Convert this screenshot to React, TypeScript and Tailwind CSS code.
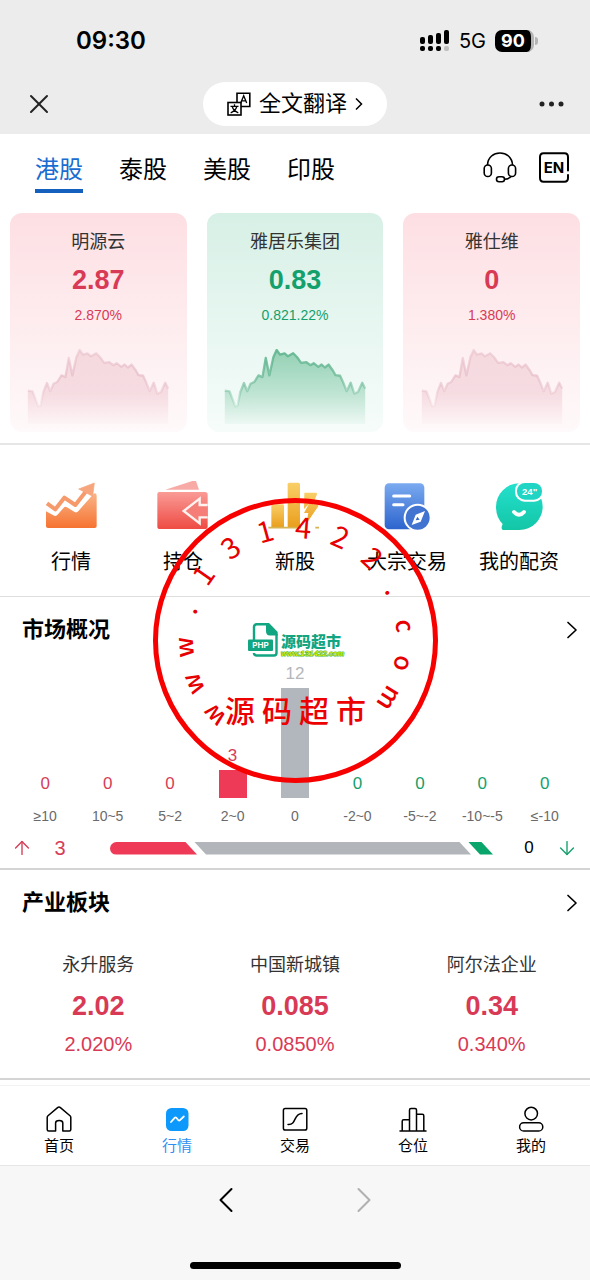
import React from "react";
import { ArrowDown, ArrowUp, ChevronLeft, ChevronRight, X } from "lucide-react";

const cards = [
  { name: "明源云", price: "2.87", change: "2.870%", up: true },
  { name: "雅居乐集团", price: "0.83", change: "0.821.22%", up: false },
  { name: "雅仕维", price: "0", change: "1.380%", up: true },
];

const industries = [
  { name: "永升服务", price: "2.02", change: "2.020%" },
  { name: "中国新城镇", price: "0.085", change: "0.0850%" },
  { name: "阿尔法企业", price: "0.34", change: "0.340%" },
];

const distribution = [
  { label: "≥10", value: 0, color: "text-[#d63d57]" },
  { label: "10~5", value: 0, color: "text-[#d63d57]" },
  { label: "5~2", value: 0, color: "text-[#d63d57]" },
  { label: "2~0", value: 3, color: "text-[#d63d57]", bar: "bg-[#ee3a56]" },
  { label: "0", value: 12, color: "text-[#b4b7bc]", bar: "bg-[#b2b6bd]" },
  { label: "-2~0", value: 0, color: "text-[#14a06c]" },
  { label: "-5~-2", value: 0, color: "text-[#14a06c]" },
  { label: "-10~-5", value: 0, color: "text-[#14a06c]" },
  { label: "≤-10", value: 0, color: "text-[#14a06c]" },
];

const TREND =
  "M0 126 L14 128 L22 148 L32 174 L39 170 L47 130 L58 103 L68 128 L78 105 L89 100 L102 80 L114 85 L124 27 L135 80 L147 25 L157 3 L167 17 L181 13 L191 22 L207 13 L219 25 L231 42 L247 40 L259 49 L269 43 L283 54 L293 47 L303 56 L314 47 L327 65 L335 79 L349 81 L359 103 L369 128 L381 102 L392 135 L403 130 L416 102 L425 120";

function TrendChart({ up, id }: { up: boolean; id: string }) {
  const tone = up ? "#e3b4c1" : "#5fb48e";
  const fill = up ? "#efc9d2" : "#8fcfb1";
  return (
    <svg viewBox="0 0 425 227" className="h-[75px] w-[142px]" aria-hidden="true">
      <defs>
        <linearGradient id={`${id}-fill`} x1="0" y1="0" x2="0" y2="1">
          <stop offset="0" stopColor={fill} stopOpacity={up ? 0.6 : 0.95} />
          <stop offset="0.6" stopColor={fill} stopOpacity={up ? 0.55 : 0.5} />
          <stop offset="1" stopColor={fill} stopOpacity="0.08" />
        </linearGradient>
        <linearGradient id={`${id}-line`} x1="0" y1="0" x2="0" y2="1">
          <stop offset="0" stopColor={tone} stopOpacity={up ? 0.4 : 0.9} />
          <stop offset="0.45" stopColor={tone} stopOpacity={up ? 0.6 : 0.7} />
          <stop offset="1" stopColor={tone} stopOpacity="0.15" />
        </linearGradient>
      </defs>
      <path d={`${TREND} V227 H0 Z`} fill={`url(#${id}-fill)`} />
      <path d={TREND} fill="none" stroke={`url(#${id}-line)`} strokeWidth="7" strokeLinejoin="round" />
    </svg>
  );
}

function Gradient({ id, from, to }: { id: string; from: string; to: string }) {
  return (
    <defs>
      <linearGradient id={id} x1="0" y1="0" x2="0" y2="1">
        <stop offset="0" stopColor={from} />
        <stop offset="1" stopColor={to} />
      </linearGradient>
    </defs>
  );
}

const iconBox = "h-[50px] w-14";

const shortcuts = [
  {
    label: "行情",
    icon: (
      <svg viewBox="129 63 168 150" className={iconBox} aria-hidden="true">
        <Gradient id="s1" from="#f9b487" to="#f67331" />
        <path d="M138 154 L160 166 Q168 171 174 163 L191 143 Q195 138 201 142 L224 156 Q230 160 236 152 L281 101 Q289 97 290 107 V199 Q290 204 284 204 H144 Q138 204 138 198 Z" fill="url(#s1)" />
        <path d="M141 130 L166 148 L193 113 L226 135 L264 86" fill="none" stroke="#f69a6c" strokeWidth="12" strokeLinejoin="round" />
        <path d="M236 87 L283 69 L278 109 Z" fill="#f6a57c" stroke="#f6a57c" strokeWidth="2" strokeLinejoin="round" />
      </svg>
    ),
  },
  {
    label: "持仓",
    icon: (
      <svg viewBox="465 63 168 150" className={iconBox} aria-hidden="true">
        <Gradient id="s2" from="#fa9b96" to="#ee4b43" />
        <path d="M496 89 L580 62 Q587 59 589 66 L597 89 Z" fill="#f7aaa6" />
        <path d="M478 96 H615 Q623 96 623 104 V200 Q623 207 616 207 H480 Q472 207 472 200 V103 Q472 96 478 96 Z" fill="url(#s2)" />
        <path d="M623 135 H599 V116 L551 153 L599 190 V172 H623" fill="#f57f78" stroke="#fff3ef" strokeWidth="7" />
      </svg>
    ),
  },
  {
    label: "新股",
    icon: (
      <svg viewBox="0 0 168 150" className={iconBox} aria-hidden="true">
        <Gradient id="s3" from="#f9cf68" to="#ea9f1d" />
        <path d="M13 74 Q13 70 18 70 H46 Q51 70 51 74 V138 H13 Z" fill="url(#s3)" />
        <path d="M62 10 Q62 5 67 5 H94 Q99 5 99 10 V138 H62 Z" fill="url(#s3)" />
        <path d="M112 35 H146 Q151 35 150 40 L138 70 H151 Q156 71 153 77 L118 128 L124 96 H111 L126 68 L111 84 Z" fill="url(#s3)" />
        <path d="M4 140 H102 M145 140 H156" stroke="#d6b44f" strokeWidth="5" />
      </svg>
    ),
  },
  {
    label: "大宗交易",
    icon: (
      <svg viewBox="0 0 168 150" className={iconBox} aria-hidden="true">
        <Gradient id="s4" from="#7baaf0" to="#2c64cd" />
        <rect x="17" y="7" width="119" height="138" rx="13" fill="url(#s4)" />
        <path d="M44 45 H92 M44 71 H72" stroke="#fff" strokeWidth="9" strokeLinecap="round" />
        <circle cx="116" cy="110" r="42" fill="#fff" />
        <circle cx="116" cy="110" r="36" fill="#4174d0" />
        <path d="M138 90 L125 122 L98 132 L110 101 Z" fill="#fff" />
        <path d="M115 107 L122 116 L110 118 Z" fill="#3469c8" />
      </svg>
    ),
  },
  {
    label: "我的配资",
    icon: (
      <svg viewBox="0 0 168 150" className={iconBox} aria-hidden="true">
        <Gradient id="s5" from="#24e0cd" to="#13c6a6" />
        <path d="M35 129 Q15 109 15 77 A70 70 0 0 1 85 7 A70 70 0 0 1 155 77 A70 70 0 0 1 85 147 H36 Q28 144 35 129 Z" fill="url(#s5)" />
        <rect x="72" y="0" width="87" height="62" rx="29" fill="#fff" />
        <rect x="78" y="6" width="75" height="50" rx="24" fill="#20d5c3" />
        <text x="116" y="41" textAnchor="middle" className="fill-white font-['Liberation_Sans'] text-[29px] font-bold">24&quot;</text>
        <path d="M69 93 Q84 110 99 93" fill="none" stroke="#fff" strokeWidth="12" strokeLinecap="round" />
      </svg>
    ),
  },
];

const navIcon = "h-7 w-7";

const navItems = [
  {
    label: "首页",
    icon: (
      <svg viewBox="0 0 28 28" className={navIcon} fill="none" stroke="currentColor" strokeWidth="1.5" strokeLinejoin="round" strokeLinecap="round" aria-hidden="true">
        <path d="M10.6 26 H3.7 Q2.2 26 2.2 24.5 V12.6 Q2.2 11.4 3 10.7 L12.6 2.6 Q14 1.5 15.4 2.6 L25 10.7 Q25.8 11.4 25.8 12.6 V24.5 Q25.8 26 24.3 26 H17.8 V18 Q17.8 15.6 14.2 15.6 Q10.6 15.6 10.6 18 Z" />
      </svg>
    ),
  },
  {
    label: "行情",
    active: true,
    icon: (
      <svg viewBox="0 0 28 28" className={navIcon} fill="none" aria-hidden="true">
        <rect x="3" y="3" width="22.5" height="23" rx="5.5" fill="#0d99fb" />
        <path d="M8 17 L11.6 12.8 Q12.5 12 13.4 12.8 L15.3 15.2 Q16.2 16 17 15.2 L20.8 11.5" stroke="#fff" strokeWidth="1.8" strokeLinecap="round" />
      </svg>
    ),
  },
  {
    label: "交易",
    icon: (
      <svg viewBox="0 0 28 28" className={navIcon} fill="none" stroke="currentColor" strokeWidth="1.5" strokeLinecap="round" aria-hidden="true">
        <rect x="2.4" y="3.6" width="23.4" height="21.4" rx="1.8" />
        <path d="M7 19.4 C16 20, 12 8.6, 21 8.4" />
      </svg>
    ),
  },
  {
    label: "仓位",
    icon: (
      <svg viewBox="0 0 28 28" className={navIcon} fill="none" stroke="currentColor" strokeWidth="1.5" strokeLinecap="round" strokeLinejoin="round" aria-hidden="true">
        <path d="M1 26 H27 M3.2 26 V16.3 Q3.2 14.8 4.7 14.8 H10.5 M10.5 26 V5 Q10.5 3.5 12 3.5 H16 Q17.5 3.5 17.5 5 V26 M17.5 9.3 H23.3 Q24.8 9.3 24.8 10.8 V26" />
      </svg>
    ),
  },
  {
    label: "我的",
    icon: (
      <svg viewBox="0 0 28 28" className={navIcon} fill="none" stroke="currentColor" strokeWidth="1.5" aria-hidden="true">
        <circle cx="14.2" cy="8.6" r="6.3" />
        <rect x="2.6" y="17.8" width="23.2" height="8.2" rx="4.1" />
      </svg>
    ),
  },
];

const sealLetters = [..."www.131422.com"];

function Seal() {
  return (
    <svg viewBox="0 0 286 286" className="pointer-events-none absolute left-1/2 top-[497px] h-[286px] w-[286px] -translate-x-1/2" role="img" aria-label="源码超市">
      <circle cx="143.5" cy="143.5" r="140" fill="none" stroke="#f70000" strokeWidth="5" />
      {sealLetters.map((ch, i) => (
        <text
          key={i}
          x="143"
          y="41"
          textAnchor="middle"
          transform={`rotate(${-133 + i * 19.6} 143 143)`}
          className={
            /[a-z]/.test(ch)
              ? "fill-[#e60000] font-['Noto_Sans_CJK_SC'] text-[25px] font-medium"
              : "fill-[#e60000] font-['Noto_Sans_CJK_SC'] text-[29px]"
          }
        >
          {ch}
        </text>
      ))}
      <text x="88 125 162 199" y="225" textAnchor="middle" className="fill-[#ec0000] font-['Noto_Sans_CJK_SC'] text-[30px] font-medium">源码超市</text>
      <path d="M102 143 V130 Q102 127.300 104.700 127.300 H115 M124.500 137 V156 Q124.500 158.500 122 158.500 H104.700 Q102 158.500 102 156" fill="none" stroke="#12a581" strokeWidth="2.400" />
      <path d="M114 126 H117 L125.700 135 V138.500 H118 Q114 138.500 114 134 Z" fill="#12a581" />
      <rect x="96" y="142.500" width="25" height="11.500" rx="1" fill="#12a581" />
      <text x="108.500" y="151" textAnchor="middle" className="fill-white font-['Inter'] text-[8px] font-bold">PHP</text>
      <text x="129" y="150" className="fill-[#12a581] font-['Noto_Sans_CJK_SC'] text-[15px] font-black">源码超市</text>
      <text x="129" y="159" className="fill-[#f2f500] stroke-[#4fb83a] font-['Liberation_Sans'] text-[8px] italic" strokeWidth="1.2" paintOrder="stroke">www.131422.com</text>
    </svg>
  );
}

function SectionHeader({ title }: { title: string }) {
  return (
    <div className="flex items-center justify-between pl-[22px] pr-1">
      <h2 className="text-[22px] font-bold leading-8">{title}</h2>
      <button type="button" aria-label={title} className="flex h-8 w-7 items-center justify-center">
        <svg viewBox="0 0 12 20" className="h-5 w-3" fill="none" stroke="currentColor" strokeWidth="1.7" strokeLinecap="round" strokeLinejoin="round" aria-hidden="true">
          <path d="M2 2.5 L10 10 L2 17.5" />
        </svg>
      </button>
    </div>
  );
}

export default function App() {
  return (
    <div className="relative min-h-screen bg-white font-['Liberation_Sans','Noto_Sans_CJK_SC',sans-serif] text-black">
      <header className="bg-[#ececec] pb-2">
        <div className="flex h-[82px] items-center justify-between pl-[76px] pr-[52px]">
          <time className="font-['Inter',sans-serif] text-[24px] font-semibold leading-8">09:30</time>
          <div className="flex items-center gap-[9px]">
            <svg viewBox="0 0 30 22" className="h-[22px] w-[30px]" aria-hidden="true">
              <rect x="0" y="7" width="5" height="7" rx="2" />
              <rect x="8" y="5" width="5" height="9" rx="2" />
              <rect x="16" y="3" width="5" height="11" rx="2" />
              <rect x="24" y="0" width="5" height="14" rx="2" />
              <rect x="0" y="16" width="5" height="5" rx="2" />
              <rect x="8" y="16" width="5" height="5" rx="2" />
              <rect x="16" y="16" width="5" height="5" rx="2" />
              <rect x="24" y="16" width="5" height="5" rx="2" fill="#bdbdbd" />
            </svg>
            <span className="font-['Inter',sans-serif] text-[20px] leading-6">5G</span>
            <div className="flex items-center gap-px">
              <span className="flex h-[22px] w-[39px] items-center justify-center rounded-[7px] border-r-3 border-[#b4b4b4] bg-black font-['Inter',sans-serif] text-[18px] font-bold leading-[22px] text-white">90</span>
              <span className="h-2 w-[3px] rounded-r bg-[#b4b4b4]" />
            </div>
          </div>
        </div>
        <div className="grid grid-cols-[1fr_auto_1fr] items-center px-6">
          <button type="button" aria-label="关闭" className="justify-self-start">
            <X className="-mx-px h-8 w-8 text-[#222]" strokeWidth={1.5} />
          </button>
          <button type="button" className="flex h-11 items-center gap-2 rounded-full bg-white px-6 text-[22px] leading-8">
            <svg viewBox="0 0 24 24" className="h-6 w-6" fill="none" stroke="black" strokeWidth="1.6" aria-hidden="true">
              <path d="M10 10 V1.2 H22.8 V14.5 H14" />
              <rect x="1" y="10.5" width="13" height="12.5" />
              <path d="M13.7 11 L16.7 3.8 L19.7 11 M14.8 8.8 H18.6" strokeWidth="1.3" />
              <path d="M3.5 14.3 H11.5 M7.5 12.3 V14.3 M9.8 14.5 Q8.5 19 3.7 20.8 M5.2 14.5 Q6.5 19 11.3 20.8" strokeWidth="1.3" />
            </svg>
            全文翻译
            <svg viewBox="0 0 8 12" className="h-3 w-2" fill="none" stroke="black" strokeWidth="1.5" aria-hidden="true">
              <path d="M1 0.5 L6.5 6 L1 11.5" />
            </svg>
          </button>
          <button type="button" aria-label="更多" className="justify-self-end">
            <svg viewBox="0 0 28 8" className="h-2 w-7" fill="#222" aria-hidden="true">
              <circle cx="4" cy="4" r="2.5" />
              <circle cx="13.5" cy="4" r="2.5" />
              <circle cx="23" cy="4" r="2.5" />
            </svg>
          </button>
        </div>
      </header>

      <main>
        <div className="flex items-start justify-between pb-5 pl-[35px] pr-5 pt-[17px]">
          <div className="flex gap-9 pt-[3px]">
            {["港股", "泰股", "美股", "印股"].map((tab, i) => (
              <button
                key={tab}
                type="button"
                className={
                  i === 0
                    ? "border-b-4 border-[#1660bd] pb-[3px] text-[24px] leading-8 text-[#1a6cd0]"
                    : "border-b-4 border-transparent pb-[3px] text-[24px] leading-8"
                }
              >
                {tab}
              </button>
            ))}
          </div>
          <div className="flex gap-[21px]">
            <button type="button" aria-label="客服">
              <svg viewBox="0 0 34 32" className="h-8 w-[34px]" fill="none" stroke="black" strokeWidth="1.6" aria-hidden="true">
                <path d="M4.5 14 C5 -2,29 -2,29.5 14" />
                <rect x="1.2" y="14" width="7.2" height="11.5" rx="3.6" />
                <rect x="25.4" y="14" width="7.2" height="11.5" rx="3.6" />
                <path d="M28.5 25 Q26 28 21.5 28.2" />
                <rect x="13.5" y="25.8" width="8" height="5" rx="2.5" />
              </svg>
            </button>
            <button type="button" aria-label="English">
              <svg viewBox="0 0 32 32" className="h-8 w-8" aria-hidden="true">
                <path d="M30 19.5 V6 Q30 2.3 26.5 2.3 H5.5 Q2 2.3 2 6 V27 Q2 30.7 5.5 30.7 H26.5 Q30 30.7 30 27 V24" fill="none" stroke="black" strokeWidth="2" strokeLinecap="round" />
                <text x="16" y="22" textAnchor="middle" className="font-['Inter'] text-[15px] font-bold">EN</text>
              </svg>
            </button>
          </div>
        </div>

        <section className="grid grid-cols-3 gap-5 border-b-2 border-[#e6e6e6] px-[10px] pb-[11px]">
          {cards.map((card, i) => (
            <article
              key={card.name}
              className={
                card.up
                  ? "flex flex-col items-center rounded-xl bg-linear-to-b from-[#fddfe3] to-[#fef9fa] pb-2 pt-[17px] text-[#d83a56]"
                  : "flex flex-col items-center rounded-xl bg-linear-to-b from-[#d7f0e6] to-[#f6fcfa] pb-2 pt-[17px] text-[#14a06c]"
              }
            >
              <h3 className="text-[18px] leading-6 text-[#333]">{card.name}</h3>
              <p className="mt-[10px] text-[27px] font-bold leading-8">{card.price}</p>
              <p className="mt-[9px] text-sm leading-5">{card.change}</p>
              <div className="mt-6">
                <TrendChart up={card.up} id={`trend-${i}`} />
              </div>
            </article>
          ))}
        </section>

        <section className="grid grid-cols-5 border-b border-[#dedede] px-[15px] pb-[22px] pt-9">
          {shortcuts.map((item) => (
            <a key={item.label} href="#" className="flex flex-col items-center gap-[19px] whitespace-nowrap text-[20px] leading-6">
              {item.icon}
              {item.label}
            </a>
          ))}
        </section>

        <section className="border-b-2 border-[#d4d4d4] pb-2 pt-[17px]">
          <SectionHeader title="市场概况" />
          <div className="mt-[14px] grid grid-cols-9 px-[14px]">
            {distribution.map((d) => (
              <div key={d.label} className="flex flex-col items-center">
                <div className="flex h-[138px] flex-col items-center justify-end">
                  <span className={`${d.color} mb-1 text-[17px] leading-5`}>{d.value}</span>
                  <div className={`w-7 ${d.bar ?? ""}`} style={{ height: Math.round(d.value * 9.17) }} />
                </div>
                <span className="mt-2 whitespace-nowrap text-sm leading-5 text-[#6a6a6a]">{d.label}</span>
              </div>
            ))}
          </div>
          <div className="mt-[10px] flex h-6 items-center pl-[11px] pr-[12px]">
            <ArrowUp className="h-[22px] w-[22px] text-[#d63d57]" strokeWidth={1.5} />
            <span className="w-[54px] text-center text-[20px] leading-6 text-[#d63d57]">3</span>
            <div className="ml-[23px] flex h-[13px] flex-1">
              <div className="w-[87px] rounded-l-full bg-[#ee3a56] [clip-path:polygon(0_0,calc(100%-12px)_0,100%_100%,0_100%)]" />
              <div className="-ml-[3px] flex-1 bg-[#b2b6ba] [clip-path:polygon(0_0,calc(100%-12px)_0,100%_100%,12px_100%)]" />
              <div className="-ml-[3px] w-[25px] bg-[#0aa56b] [clip-path:polygon(0_0,13px_0,100%_100%,12px_100%)]" />
            </div>
            <span className="ml-[9px] w-[54px] text-center text-[17px] leading-6">0</span>
            <ArrowDown className="h-[22px] w-[22px] text-[#14a06c]" strokeWidth={1.5} />
          </div>
        </section>

        <section className="border-b-2 border-[#d4d4d4] pb-[22px] pt-[17px]">
          <SectionHeader title="产业板块" />
          <div className="mt-[34px] grid grid-cols-3">
            {industries.map((item) => (
              <article key={item.name} className="flex flex-col items-center text-[#d83a56]">
                <h3 className="text-[18px] leading-6 text-[#333]">{item.name}</h3>
                <p className="mt-[13px] text-[27px] font-bold leading-8">{item.price}</p>
                <p className="mt-[10px] text-[20px] leading-6">{item.change}</p>
              </article>
            ))}
          </div>
        </section>

        <nav className="mt-[5px] grid grid-cols-5 border-t border-[#f3f3f3] pb-[9px] pt-[19px]">
          {navItems.map((item) => (
            <a
              key={item.label}
              href="#"
              className={
                item.active
                  ? "flex flex-col items-center gap-[3px] text-[15px] leading-5 text-[#2f8ff0]"
                  : "flex flex-col items-center gap-[3px] text-[15px] leading-5"
              }
            >
              {item.icon}
              {item.label}
            </a>
          ))}
        </nav>
      </main>

      <footer className="border-t border-[#e6e6e6] bg-[#f7f7f7] pb-[11px] pt-3">
        <div className="flex justify-center gap-[94px]">
          <button type="button" aria-label="后退">
            <ChevronLeft className="h-11 w-11" strokeWidth={1.1} />
          </button>
          <button type="button" aria-label="前进" className="text-[#b0b0b0]">
            <ChevronRight className="h-11 w-11" strokeWidth={1.1} />
          </button>
        </div>
        <div className="mx-auto mt-10 h-[7px] w-[211px] rounded-full bg-black" />
      </footer>

      <Seal />
    </div>
  );
}
